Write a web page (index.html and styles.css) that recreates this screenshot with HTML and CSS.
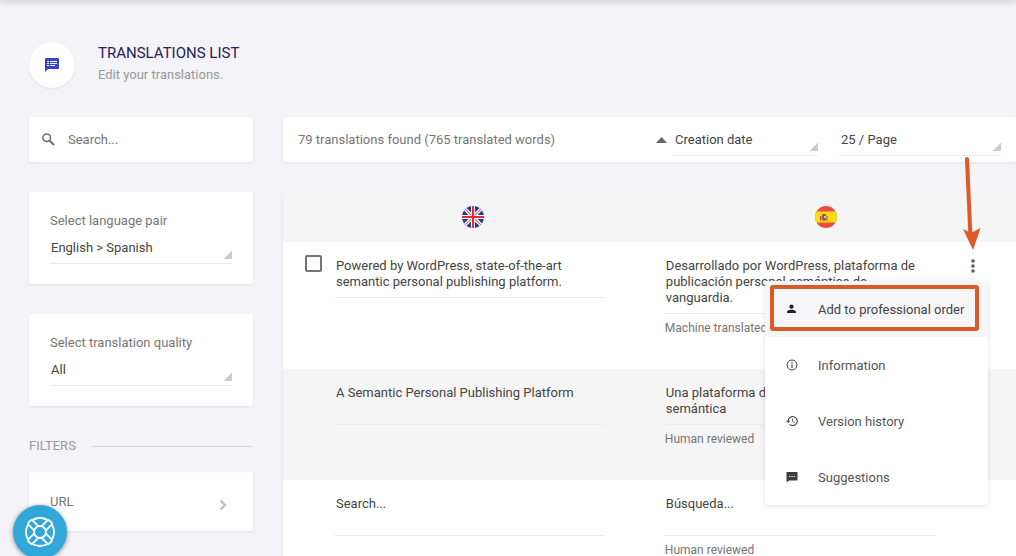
FILE: index.html
```html
<!DOCTYPE html>
<html lang="en">
<head>
<meta charset="utf-8">
<meta name="viewport" content="width=device-width, initial-scale=1">
<title>Translations list</title>
<link rel="stylesheet" href="styles.css">
</head>
<body>
<div class="top-shadow"></div>
<div class="page">
  <header class="page-header">
    <span class="page-icon">
      <svg width="14" height="14" viewBox="0 0 14 14" aria-hidden="true"><path fill="#3740cf" d="M1 0h12a1 1 0 0 1 1 1v9a1 1 0 0 1-1 1H3l-3 3V1a1 1 0 0 1 1-1z"/><path stroke="#fff" d="M2 3.500h2M5 3.500h7M2 5.500h2M5 5.500h7M2 7.500h2M5 7.500h5"/></svg>
    </span>
    <div>
      <h1 class="page-title">TRANSLATIONS LIST</h1>
      <p class="page-subtitle">Edit your translations.</p>
    </div>
  </header>

  <div class="columns">
    <aside class="sidebar">
      <label class="card search">
        <svg width="13" height="13" viewBox="0 0 13 13" aria-hidden="true"><circle cx="4.700" cy="4.700" r="3.800" fill="none" stroke="#6b6b6b" stroke-width="1.500"/><path d="M7.500 7.500 12 12" stroke="#6b6b6b" stroke-width="2"/></svg>
        <input class="search-input" type="text" placeholder="Search..." aria-label="Search">
      </label>
      <div class="card filter">
        <label class="filter-label" for="pair">Select language pair</label>
        <select class="select" id="pair"><option>English &gt; Spanish</option></select>
      </div>
      <div class="card filter">
        <label class="filter-label" for="quality">Select translation quality</label>
        <select class="select" id="quality"><option>All</option></select>
      </div>
      <h2 class="section-title">FILTERS</h2>
      <button class="card url-filter" type="button">
        <span>URL</span>
        <svg class="chevron" width="8" height="12" viewBox="0 0 8 12" aria-hidden="true"><path d="M1.500 1.500 6 6 1.500 10.500" fill="none" stroke="#b9b9b9" stroke-width="2"/></svg>
      </button>
    </aside>

    <main class="main">
      <div class="card toolbar">
        <span class="count">79 translations found (765 translated words)</span>
        <button class="sort" type="button" aria-label="Sort ascending"><svg width="11" height="6" viewBox="0 0 11 6"><path d="M0 6 5.500 0 11 6z" fill="#666"/></svg></button>
        <select class="select sort-by" aria-label="Sort by"><option>Creation date</option></select>
        <select class="select per-page" aria-label="Items per page"><option>25 / Page</option></select>
      </div>

      <table class="card translations">
        <colgroup><col class="col-check"><col class="col-source"><col></colgroup>
        <thead>
          <tr>
            <th class="source-head" colspan="2">
              <svg class="flag" width="22" height="22" viewBox="0 0 22 22" role="img" aria-label="English">
                <clipPath id="round"><circle cx="11" cy="11" r="11"/></clipPath>
                <g clip-path="url(#round)"><path fill="#1c3f94" d="M0 0h22v22H0z"/><path d="m0 0 22 22M22 0 0 22" stroke="#fff" stroke-width="3.500"/><path d="m0 0 22 22M22 0 0 22" stroke="#f0606a" stroke-width="1.200"/><path d="M11 0v22M0 11h22" stroke="#fff" stroke-width="4"/><path d="M11 0v22M0 11h22" stroke="#ee2536" stroke-width="2.200"/></g>
              </svg>
            </th>
            <th class="target-head">
              <svg class="flag" width="22" height="22" viewBox="0 0 22 22" role="img" aria-label="Spanish">
                <g clip-path="url(#round)"><path fill="#e94b3c" d="M0 0h22v22H0z"/><path fill="#ffd91a" d="M0 5.500h22v11H0z"/><path fill="#b8623a" d="M5 10h1v5H5zM11.500 10h1v5h-1z"/><path fill="#9c5a2a" d="M7 8h4v2H7z"/><path fill="#b5503a" d="M6.500 10h5v3.500q-2.500 2.500-5 0z"/><path fill="#d8c6c0" d="M9 10h2v2H9z"/><path fill="#8d5b56" d="M7 12h2v2H7z"/></g>
              </svg>
            </th>
          </tr>
        </thead>
        <tbody>
          <tr>
            <td class="check-cell"><input class="check" type="checkbox" aria-label="Select translation"></td>
            <td><textarea class="text" rows="2" readonly aria-label="English text">Powered by WordPress, state-of-the-art semantic personal publishing platform.</textarea></td>
            <td>
              <div class="target">
                <div class="target-body">
                  <textarea class="text" rows="3" aria-label="Spanish text">Desarrollado por WordPress, plataforma de publicación personal semántica de vanguardia.</textarea>
                  <p class="status">Machine translated</p>
                </div>
                <div class="actions">
                  <button class="more" type="button" aria-label="Actions" aria-expanded="true"><svg width="4" height="14" viewBox="0 0 4 14"><g fill="#5c6066"><circle cx="2" cy="2" r="1.800"/><circle cx="2" cy="7" r="1.800"/><circle cx="2" cy="12" r="1.800"/></g></svg></button>
                  <div class="menu">
                    <button class="menu-item active" type="button">
                      <svg width="12" height="12" viewBox="0 0 12 12"><path fill="#222" d="M5.500 1.500a2.100 2.100 0 0 1 0 4.300 2.100 2.100 0 0 1 0-4.300zM1 10V9c0-1.500 3-2.200 4.500-2.200s4.500.7 4.500 2.200v1z"/></svg>Add to professional order</button>
                    <button class="menu-item" type="button">
                      <svg width="12" height="12" viewBox="0 0 12 12"><circle cx="6" cy="6" r="5" fill="none" stroke="#444"/><path d="M6 3v1.200M6 5.200V9" stroke="#444" stroke-width="1.200"/></svg>Information</button>
                    <button class="menu-item" type="button">
                      <svg width="12" height="12" viewBox="0 0 12 12"><path d="M2.200 6a4.500 4.500 0 1 1 1.500 3.400" fill="none" stroke="#444" stroke-width="1.100"/><path fill="#444" d="M0 5.800h4.300L2.200 8z"/><path d="M6.600 3.500v2.800l2 1.200" fill="none" stroke="#444" stroke-width=".9"/></svg>Version history</button>
                    <button class="menu-item" type="button">
                      <svg width="12" height="12" viewBox="0 0 12 12"><path fill="#3d3d3d" d="M.5 1h11v8.500H3L.5 11.500z"/><path stroke="#fff" d="M3 5.500h1.300M5.400 5.500h1.300M7.800 5.500h1.300"/></svg>Suggestions</button>
                    <span class="highlight"></span>
                  </div>
                  <svg class="pointer" width="20" height="94" viewBox="0 0 20 94" aria-hidden="true"><path d="m5 2 3.500 78" stroke="#dc5a26" stroke-width="4" stroke-linecap="round"/><path fill="#dc5a26" d="m1 72 8 4 9.500-5L11 93z"/></svg>
                </div>
              </div>
            </td>
          </tr>
          <tr>
            <td></td>
            <td><textarea class="text" rows="2" readonly aria-label="English text">A Semantic Personal Publishing Platform</textarea></td>
            <td>
              <div class="target-body">
                <textarea class="text" rows="2" aria-label="Spanish text">Una plataforma de publicación personal semántica</textarea>
                <p class="status">Human reviewed</p>
              </div>
            </td>
          </tr>
          <tr>
            <td></td>
            <td><textarea class="text" rows="2" readonly aria-label="English text">Search...</textarea></td>
            <td>
              <div class="target-body">
                <textarea class="text" rows="2" aria-label="Spanish text">Búsqueda...</textarea>
                <p class="status">Human reviewed</p>
              </div>
            </td>
          </tr>
        </tbody>
      </table>
    </main>
  </div>
</div>

<button class="help" type="button" aria-label="Help">
  <svg width="32" height="32" viewBox="0 0 32 32"><g fill="#31a8d9" stroke="#fff" stroke-width="1.800"><circle cx="16" cy="16" r="14"/><g transform="rotate(45 16 16)"><rect x="13" y="1.200" width="6" height="29.600" rx="2"/></g><g transform="rotate(-45 16 16)"><rect x="13" y="1.200" width="6" height="29.600" rx="2"/></g><circle cx="16" cy="16" r="6"/></g></svg>
</button>
</body>
</html>
```
FILE: styles.css
```css
* { box-sizing: border-box; }

html { scrollbar-width: none; }

body {
  margin: 0;
  background: #f3f3f8;
  color: #444;
  font: 13px/16px Roboto, "Liberation Sans", sans-serif;
}

button, input, select, textarea {
  margin: 0;
  border: 0;
  font: inherit;
  color: inherit;
  background: none;
}

button { padding: 0; }

.top-shadow { box-shadow: 0 0 6px 1px rgba(0, 0, 0, .35); }

.page { padding: 42px 0 0 29px; }

.page-header {
  display: flex;
  gap: 23px;
  margin-bottom: 29px;
}

.page-icon {
  display: flex;
  align-items: center;
  justify-content: center;
  width: 46px;
  height: 46px;
  border-radius: 50%;
  background: #fff;
  box-shadow: 0 1px 3px rgba(0, 0, 0, .08);
}

.page-title {
  margin: 0;
  font-size: 15px;
  font-weight: 400;
  line-height: 22px;
  color: #25215c;
}

.page-subtitle {
  margin: 3px 0 0;
  color: #999;
}

.columns {
  display: grid;
  grid-template-columns: 224px 1fr;
  gap: 30px;
}

.card {
  background: #fff;
  border-radius: 2px;
  box-shadow: 0 1px 3px rgba(0, 0, 0, .08);
}

.sidebar {
  display: flex;
  flex-direction: column;
}

.search {
  display: flex;
  align-items: center;
  gap: 13px;
  height: 45px;
  margin-bottom: 30px;
  padding: 0 13px;
}

.search-input {
  flex: 1;
  min-width: 0;
  padding: 0;
  outline: 0;
}

.search-input::placeholder { color: #757575; }

.filter {
  margin-bottom: 30px;
  padding: 21px 21px 20px;
}

.filter-label {
  display: block;
  margin-bottom: 2px;
  color: #757575;
}

.select {
  width: 100%;
  height: 33px;
  padding: 1px 1px 0 2px;
  appearance: none;
  border-bottom: 1px solid #ececec;
  border-radius: 0;
  background: linear-gradient(135deg, transparent 50%, #ccc 50%) right bottom 4px / 8px 8px no-repeat;
}

.filter .select { padding-left: 1px; }

.section-title {
  display: flex;
  align-items: center;
  gap: 15px;
  margin: 2px 0 18px;
  font-size: 13px;
  font-weight: 400;
  color: #999;
}

.section-title::after {
  content: "";
  flex: 1;
  border-top: 1px solid #d6d6dc;
}

.url-filter {
  display: flex;
  align-items: center;
  justify-content: space-between;
  height: 59px;
  padding: 0 26px 0 21px;
  color: #757575;
}

.chevron { margin-top: 7px; }

.main { min-width: 0; }

.toolbar {
  display: flex;
  align-items: center;
  height: 45px;
  margin-bottom: 30px;
  padding: 0 15px;
}

.count {
  flex: 1;
  color: #757575;
}

.sort {
  display: flex;
  margin-right: 6px;
}

.sort-by {
  width: 145px;
  margin-right: 21px;
}

.per-page { width: 162px; }

.translations {
  width: 100%;
  border-collapse: collapse;
  table-layout: fixed;
}

.col-check { width: 52px; }

.col-source { width: 45%; }

th {
  height: 50px;
  padding: 0;
  background: #f5f5f5;
}

.source-head { padding-right: 2px; }

.target-head { padding-right: 29px; }

.flag { display: inline-block; vertical-align: middle; }

td {
  padding: 16px 0 0;
  vertical-align: top;
}

tbody tr:nth-child(even) { background: #f5f5f5; }

.check-cell { padding: 13px 0 0 22px; }

.check {
  display: block;
  width: 17px;
  height: 17px;
  appearance: none;
  border: 2px solid #757575;
  border-radius: 2px;
}

.text {
  display: block;
  width: 270px;
  padding: 0 1px 7px;
  overflow: hidden;
  resize: none;
  outline: 0;
  border-bottom: 1px solid #ececec;
}

.status {
  margin: 0;
  padding: 6px 0 33px;
  font-size: 12px;
  color: #757575;
}

.target {
  display: flex;
  justify-content: space-between;
}

.actions {
  position: relative;
  width: 24px;
  height: 16px;
  margin-right: 31px;
}

.more {
  display: flex;
  justify-content: center;
  align-items: center;
  width: 24px;
  height: 16px;
}

.menu {
  position: absolute;
  top: 23px;
  right: -3px;
  z-index: 1;
  width: 223px;
  border-radius: 2px;
  background: #fff;
  box-shadow: 0 1px 5px rgba(0, 0, 0, .12);
}

.menu::before {
  content: "";
  position: absolute;
  top: -5px;
  right: 10px;
  border: 6px solid transparent;
  border-top: 0;
  border-bottom: 5px solid #f6f6f9;
}

.menu-item {
  display: flex;
  align-items: center;
  gap: 20px;
  width: 100%;
  height: 56px;
  padding: 2px 21px 0;
  white-space: nowrap;
  color: #555;
}

.menu-item svg {
  flex: none;
  margin-bottom: 2px;
}

.menu-item.active {
  background: #f6f6f9;
  color: #444;
}

.highlight {
  position: absolute;
  top: 4px;
  left: 5px;
  right: 9px;
  height: 46px;
  border: 4px solid #dc5a26;
  border-radius: 3px;
}

.pointer {
  position: absolute;
  top: -101px;
  left: 1px;
  z-index: 2;
}

.help {
  position: fixed;
  left: 13px;
  bottom: -3px;
  display: flex;
  align-items: center;
  justify-content: center;
  width: 54px;
  height: 54px;
  border-radius: 50%;
  background: #31a8d9;
  box-shadow: 0 1px 5px rgba(0, 0, 0, .4);
}
```
